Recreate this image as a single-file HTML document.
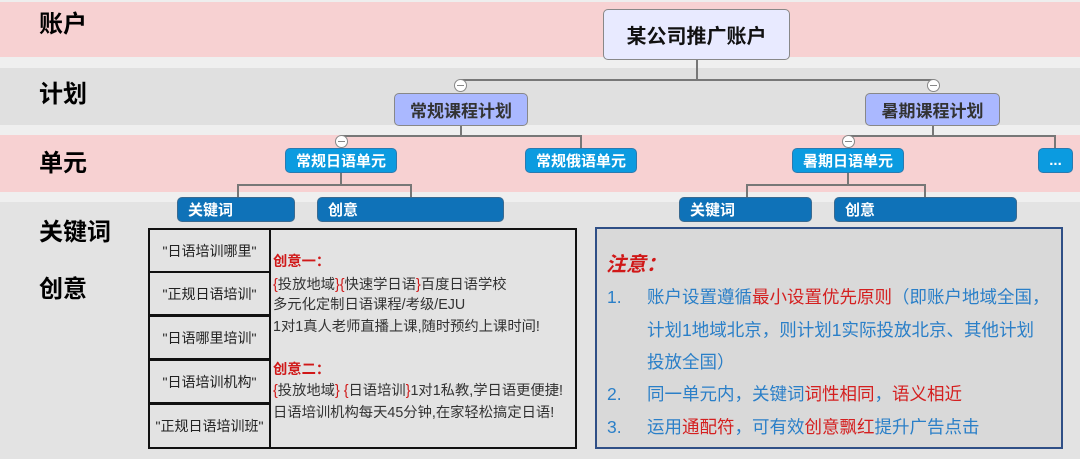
<!DOCTYPE html>
<html><head><meta charset="utf-8"><style>
*{margin:0;padding:0;box-sizing:border-box}
body{width:1080px;height:459px;position:relative;background:#e3e3e3;font-family:"Liberation Sans","Noto Sans CJK SC",sans-serif;overflow:hidden}
.a{position:absolute}
.band{position:absolute;left:0;width:1080px}
.lab{position:absolute;left:39px;font-size:24px;font-weight:bold;color:#000;line-height:30px}
.box{position:absolute;border:1.5px solid #888;border-radius:5px;display:flex;align-items:center;justify-content:center;font-weight:bold}
.unit{background:#0b9be0;color:#fff;font-size:15px;border-color:#2a7ab0}
.kw{background:#0f72b8;color:#fff;font-size:15px;justify-content:flex-start;padding-left:10px;border-color:#3a6a90}
.ln{position:absolute;background:#777}
.c{position:absolute;width:13px;height:13px;border-radius:50%;background:#fff;border:1.5px solid #888}
.c:after{content:"";position:absolute;left:2px;right:2px;top:4.5px;height:1.5px;background:#888}
.cell{position:absolute;left:148px;width:123px;height:45px;border:2px solid #111;display:flex;align-items:center;justify-content:center;font-size:14px;color:#222}
.t{position:absolute;left:273px;font-size:14.3px;color:#333;white-space:nowrap;line-height:18px}
.r{color:#d01818}
.n{position:absolute;font-size:17.5px;color:#2a7fc8;white-space:nowrap;line-height:24px}
.nr{color:#d42020}
</style></head><body>
<div class="band" style="top:0;height:2px;background:#eee"></div>
<div class="band" style="top:2px;height:55px;background:#f7d1d2"></div>
<div class="band" style="top:57px;height:11px;background:#efefef"></div>
<div class="band" style="top:68px;height:57px;background:#e0e0e0"></div>
<div class="band" style="top:125px;height:10px;background:#efefef"></div>
<div class="band" style="top:135px;height:57px;background:#f7d1d2"></div>
<div class="band" style="top:192px;height:10px;background:#efefef"></div>

<div class="lab" style="top:10px">账户</div>
<div class="lab" style="top:80px">计划</div>
<div class="lab" style="top:149px">单元</div>
<div class="lab" style="top:218px">关键词</div>
<div class="lab" style="top:275px">创意</div>

<div class="ln" style="left:696px;top:59px;width:2px;height:22px"></div>
<div class="ln" style="left:461px;top:79px;width:473px;height:2px"></div>
<div class="ln" style="left:460px;top:125px;width:2px;height:12px"></div>
<div class="ln" style="left:341px;top:135px;width:241px;height:2px"></div>
<div class="ln" style="left:580px;top:135px;width:2px;height:13px"></div>
<div class="ln" style="left:932px;top:125px;width:2px;height:12px"></div>
<div class="ln" style="left:848px;top:135px;width:208px;height:2px"></div>
<div class="ln" style="left:1054px;top:135px;width:2px;height:13px"></div>
<div class="ln" style="left:340px;top:173px;width:2px;height:12px"></div>
<div class="ln" style="left:237px;top:184px;width:175px;height:2px"></div>
<div class="ln" style="left:237px;top:184px;width:2px;height:13px"></div>
<div class="ln" style="left:410px;top:184px;width:2px;height:13px"></div>
<div class="ln" style="left:847px;top:173px;width:2px;height:12px"></div>
<div class="ln" style="left:746px;top:184px;width:180px;height:2px"></div>
<div class="ln" style="left:746px;top:184px;width:2px;height:13px"></div>
<div class="ln" style="left:924px;top:184px;width:2px;height:13px"></div>

<div class="box" style="left:603px;top:9px;width:187px;height:51px;background:#e8eaff;font-size:20px;color:#111">某公司推广账户</div>
<div class="box" style="left:394px;top:93px;width:134px;height:33px;background:#aab8ff;font-size:17px;color:#333">常规课程计划</div>
<div class="box" style="left:865px;top:93px;width:135px;height:33px;background:#aab8ff;font-size:17px;color:#333">暑期课程计划</div>
<div class="c" style="left:454px;top:79px"></div>
<div class="c" style="left:927px;top:79px"></div>
<div class="c" style="left:335px;top:135px"></div>
<div class="c" style="left:842px;top:135px"></div>

<div class="box unit" style="left:285px;top:148px;width:112px;height:25px">常规日语单元</div>
<div class="box unit" style="left:525px;top:148px;width:112px;height:25px">常规俄语单元</div>
<div class="box unit" style="left:792px;top:148px;width:112px;height:25px">暑期日语单元</div>
<div class="box unit" style="left:1038px;top:148px;width:35px;height:25px">...</div>

<div class="box kw" style="left:177px;top:197px;width:118px;height:25px">关键词</div>
<div class="box kw" style="left:317px;top:197px;width:187px;height:25px">创意</div>
<div class="box kw" style="left:679px;top:197px;width:133px;height:25px">关键词</div>
<div class="box kw" style="left:834px;top:197px;width:183px;height:25px">创意</div>

<div class="a" style="left:148px;top:228px;width:429px;height:221px;border:2px solid #111"></div>
<div class="cell" style="top:228px">"日语培训哪里"</div>
<div class="cell" style="top:271px">"正规日语培训"</div>
<div class="cell" style="top:315px">"日语哪里培训"</div>
<div class="cell" style="top:359px">"日语培训机构"</div>
<div class="cell" style="top:403px;height:46px">"正规日语培训班"</div>
<div class="t r" style="top:253px;font-weight:bold">创意一：</div>
<div class="t" style="top:276px"><span class="r">{</span>投放地域<span class="r">}{</span>快速学日语<span class="r">}</span>百度日语学校</div>
<div class="t" style="top:296px">多元化定制日语课程/考级/EJU</div>
<div class="t" style="top:318px">1对1真人老师直播上课,随时预约上课时间!</div>
<div class="t r" style="top:361px;font-weight:bold">创意二：</div>
<div class="t" style="top:382px"><span class="r">{</span>投放地域<span class="r">}</span> <span class="r">{</span>日语培训<span class="r">}</span>1对1私教,学日语更便捷!</div>
<div class="t" style="top:404px">日语培训机构每天45分钟,在家轻松搞定日语!</div>

<div class="a" style="left:595px;top:227px;width:468px;height:222px;border:2px solid #2f4f86;background:#d9d9d9"></div>
<div class="a" style="left:606px;top:248px;font-size:20px;font-weight:bold;font-style:italic;color:#d01818">注意：</div>
<div class="n" style="left:607px;top:285px">1.</div>
<div class="n" style="left:647px;top:285px">账户设置遵循<span class="nr">最小设置优先原则</span>（即账户地域全国，</div>
<div class="n" style="left:647px;top:318px">计划1地域北京，则计划1实际投放北京、其他计划</div>
<div class="n" style="left:647px;top:350px">投放全国）</div>
<div class="n" style="left:607px;top:382px">2.</div>
<div class="n" style="left:647px;top:382px">同一单元内，关键词<span class="nr">词性相同</span>，<span class="nr">语义相近</span></div>
<div class="n" style="left:607px;top:415px">3.</div>
<div class="n" style="left:647px;top:415px">运用<span class="nr">通配符</span>，可有效<span class="nr">创意飘红</span>提升广告点击</div>
</body></html>
